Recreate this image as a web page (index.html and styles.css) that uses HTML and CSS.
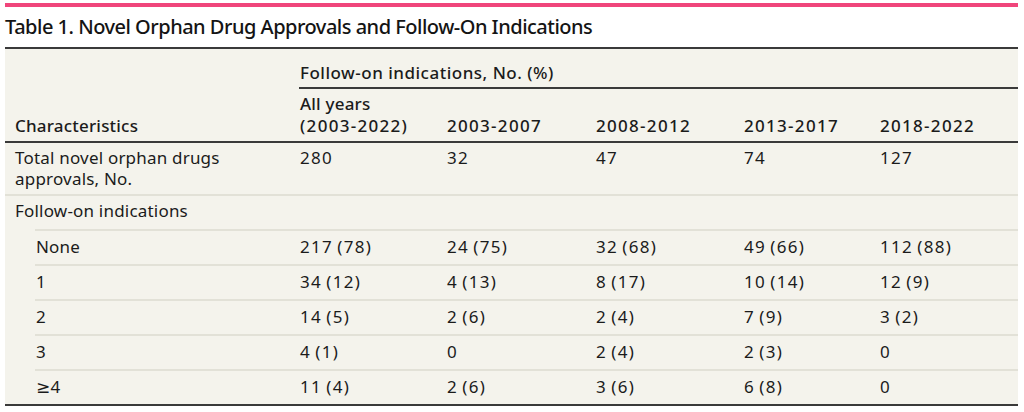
FILE: index.html
```html
<!DOCTYPE html>
<html>
<head>
<meta charset="utf-8">
<link rel="stylesheet" href="styles.css">
</head>
<body>
<div class="page">
  <div class="accent"></div>
  <h1 class="title">Table 1. Novel Orphan Drug Approvals and Follow-On Indications</h1>
  <div class="table">
    <div class="head1">
      <div class="span-label">Follow-on indications, No. (%)</div>
    </div>
    <div class="row head2">
      <div class="c0">Characteristics</div>
      <div class="c"><span class="word">All years</span><br>(2003-2022)</div>
      <div class="c">2003-2007</div>
      <div class="c">2008-2012</div>
      <div class="c">2013-2017</div>
      <div class="c">2018-2022</div>
    </div>
    <div class="row r-total">
      <div class="c0">Total novel orphan drugs<br>approvals, No.</div>
      <div class="c">280</div>
      <div class="c">32</div>
      <div class="c">47</div>
      <div class="c">74</div>
      <div class="c">127</div>
    </div>
    <div class="row r-group">
      <div class="c0">Follow-on indications</div>
    </div>
    <div class="sub">
      <div class="row r-sub">
        <div class="c0">None</div>
        <div class="c">217 (78)</div>
        <div class="c">24 (75)</div>
        <div class="c">32 (68)</div>
        <div class="c">49 (66)</div>
        <div class="c">112 (88)</div>
      </div>
      <div class="row r-sub">
        <div class="c0">1</div>
        <div class="c">34 (12)</div>
        <div class="c">4 (13)</div>
        <div class="c">8 (17)</div>
        <div class="c">10 (14)</div>
        <div class="c">12 (9)</div>
      </div>
      <div class="row r-sub">
        <div class="c0">2</div>
        <div class="c">14 (5)</div>
        <div class="c">2 (6)</div>
        <div class="c">2 (4)</div>
        <div class="c">7 (9)</div>
        <div class="c">3 (2)</div>
      </div>
      <div class="row r-sub">
        <div class="c0">3</div>
        <div class="c">4 (1)</div>
        <div class="c">0</div>
        <div class="c">2 (4)</div>
        <div class="c">2 (3)</div>
        <div class="c">0</div>
      </div>
      <div class="row r-sub">
        <div class="c0">≥4</div>
        <div class="c">11 (4)</div>
        <div class="c">2 (6)</div>
        <div class="c">3 (6)</div>
        <div class="c">6 (8)</div>
        <div class="c">0</div>
      </div>
    </div>
  </div>
</div>
</body>
</html>
```

FILE: styles.css
```css
* { box-sizing: border-box; }
html, body { margin: 0; padding: 0; background: #ffffff; }
body {
  font-family: "Noto Sans", "DejaVu Sans", sans-serif;
  color: #1b1b1b;
  font-size: 17px;
}
.page {
  width: 1013px;
  margin-left: 5px;
  padding-top: 3px;
}
.accent {
  height: 4px;
  background: #f0457b;
}
.title {
  margin: 0;
  font-size: 20px;
  font-weight: 500;
  line-height: 24px;
  padding-top: 8px;
  height: 40px;
  letter-spacing: -0.5px;
  color: #141414;
}
.table {
  background: #f4f3ec;
  border-top: 2px solid #3a3a3a;
  border-bottom: 2px solid #3a3a3a;
}
.head1 {
  padding-left: 294px;
  padding-top: 13px;
}
.span-label {
  font-weight: 500;
  line-height: 22px;
  padding-bottom: 3px;
  border-bottom: 2px solid #3a3a3a;
  letter-spacing: 0.5px;
  text-indent: 1px;
}
.row {
  display: grid;
  grid-template-columns: 285px 147px 149px 148px 136px 1fr;
}
.c0 { padding-left: 10px; letter-spacing: 0.2px; }
.c { padding-left: 10px; letter-spacing: 1.3px; word-spacing: -1.5px; }
.word { letter-spacing: 0.2px; word-spacing: 0; }
.head2 {
  font-weight: 500;
  line-height: 22px;
  padding-top: 4px;
  padding-bottom: 4px;
  border-bottom: 2px solid #3a3a3a;
  align-items: end;
}
.r-total {
  line-height: 21px;
  padding-top: 4px;
  padding-bottom: 5px;
  border-bottom: 2px solid #e2e1d7;
}
.r-group {
  line-height: 21px;
  padding-top: 4px;
  padding-bottom: 8px;
}
.sub {
  margin-left: 30px;
}
.r-sub {
  grid-template-columns: 255px 147px 149px 148px 136px 1fr;
  line-height: 21px;
  padding-top: 4.5px;
  padding-bottom: 7.5px;
  border-top: 2px solid #e2e1d7;
}
.r-sub .c0 { padding-left: 1px; }
```
